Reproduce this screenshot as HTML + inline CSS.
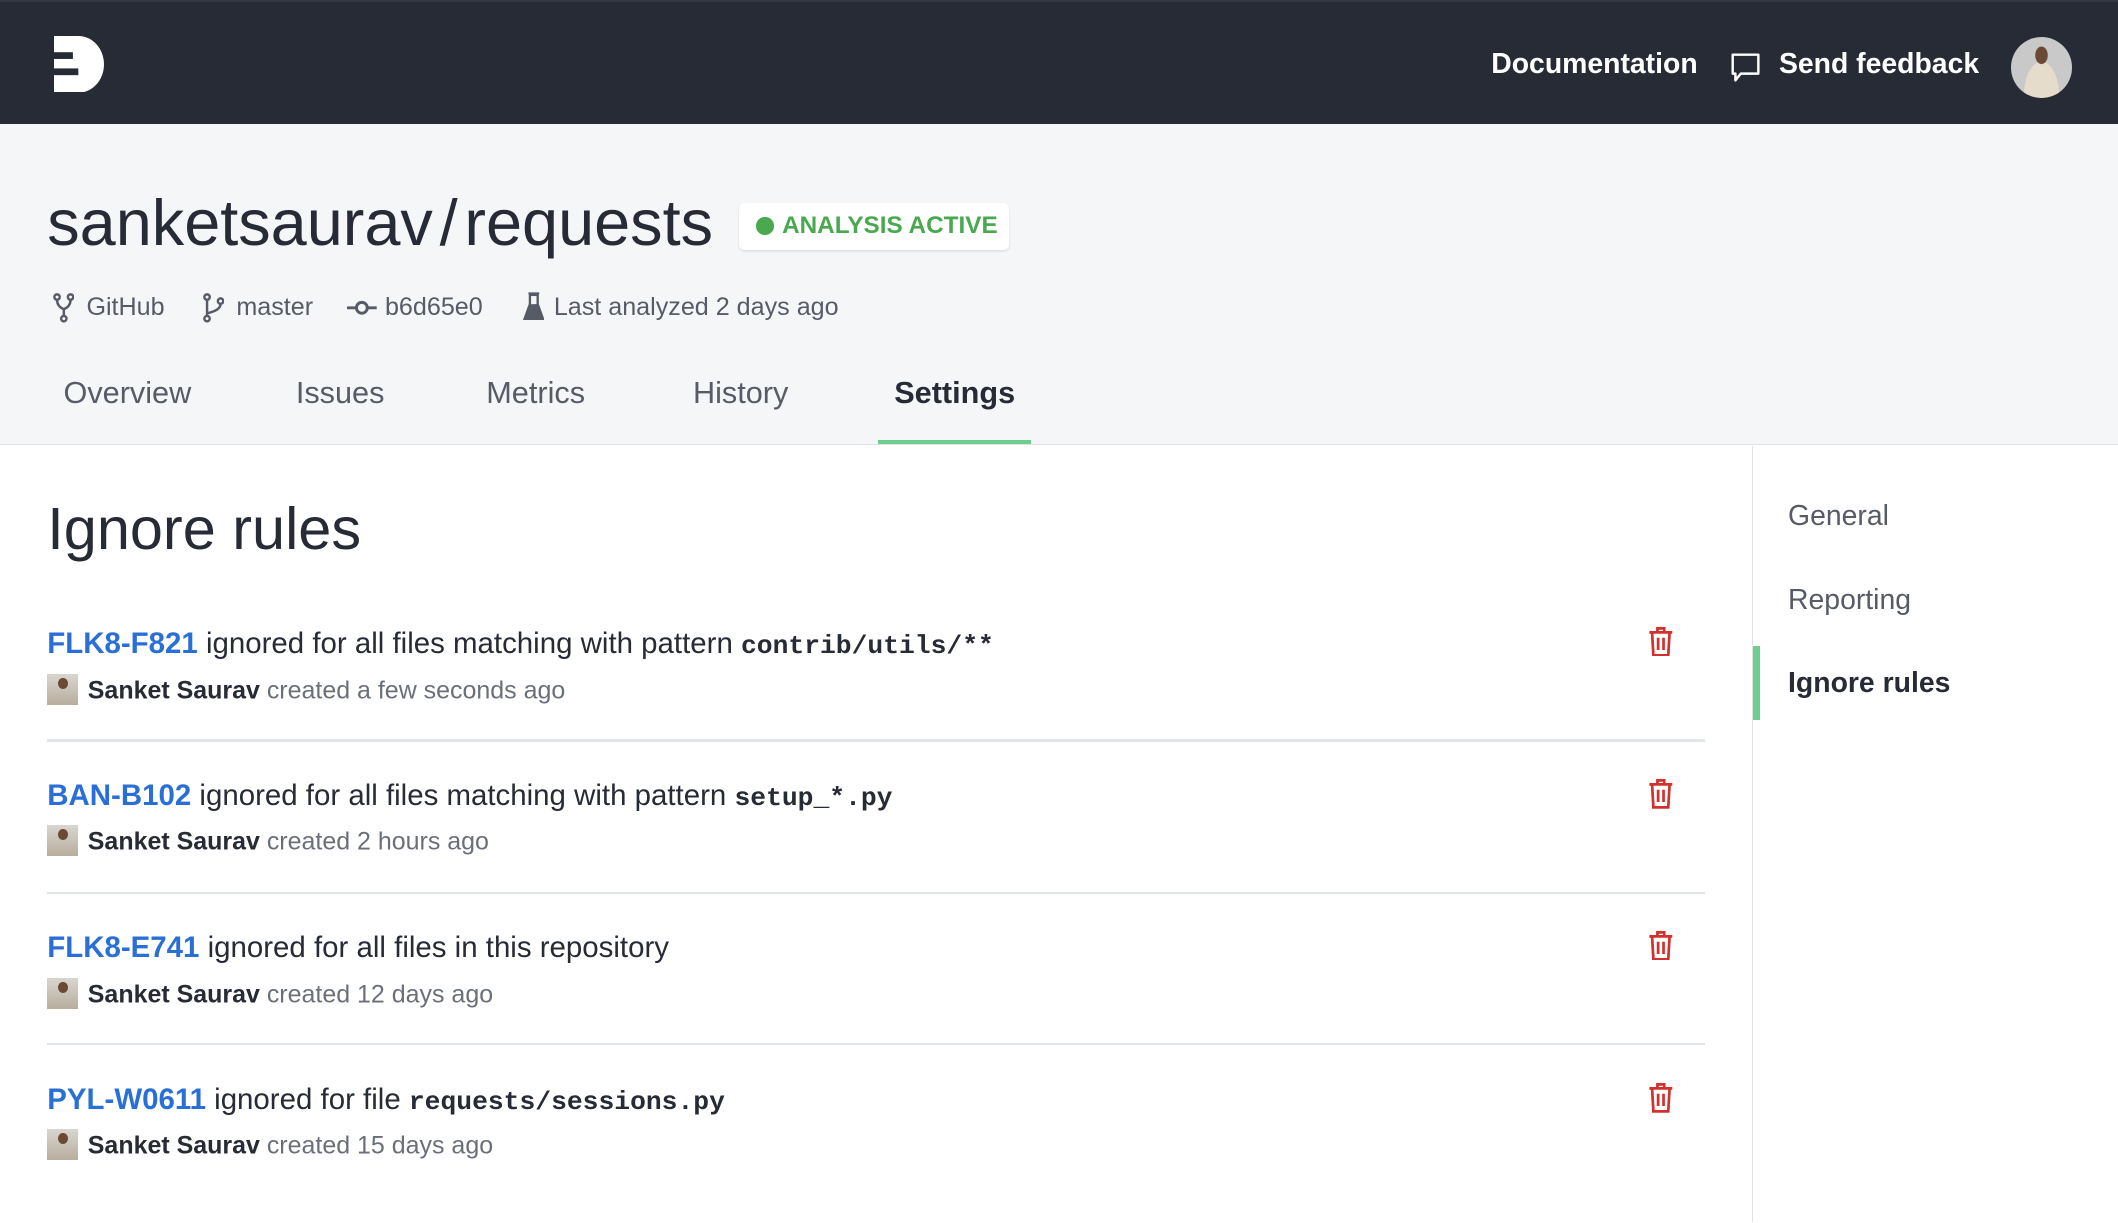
<!DOCTYPE html>
<html><head><meta charset="utf-8"><style>
html,body{margin:0;padding:0}
body{width:1568px;height:905px;zoom:1.35077;overflow:hidden;background:#fff;font-family:"Liberation Sans",sans-serif;color:#272b35;position:relative}
.hdr{position:absolute;left:0;top:0;width:1568px;height:92px;background:#272b35;border-top:2px solid #33373f;box-sizing:border-box}
.gray{position:absolute;left:0;top:92px;width:1568px;height:237px;background:#f5f6f8;border-bottom:1px solid #dfe2e6}
.abs{position:absolute;white-space:nowrap}
.nav{color:#fff;font-weight:bold;font-size:21px}
.meta{font-size:18.6px;color:#565b66;top:217px}
.tab{font-size:22.7px;color:#565b66;top:278px}
.side{position:absolute;left:1297px;top:330px;width:271px;height:575px;border-left:1px solid #dfe2e6}
.sl{position:absolute;left:26px;font-size:21px;color:#565b66}
.row .t{font-size:21.8px;color:#272b35}
.row a{color:#2a6fd6;font-weight:bold;text-decoration:none}
.row code{font-family:"Liberation Mono",monospace;font-weight:bold;font-size:19.5px}
.sub{font-size:18.5px;color:#6a6f7a}
.sub b{color:#272b35}
.av{display:inline-block;width:23px;height:23px;background:linear-gradient(#d9d6d0,#b8ad9d);vertical-align:-5px;margin-right:7px;position:relative}
.av:after{content:"";position:absolute;left:8px;top:3px;width:7px;height:8px;border-radius:50%;background:#6b4a35}
.div{position:absolute;left:35px;width:1227px;height:2px;background:#e1e4e8}
</style></head><body>
<div class="hdr">
 <svg class="abs" style="left:40px;top:25px" width="38" height="42" viewBox="0 0 38 42"><path d="M0 0H18A19 21 0 0 1 18 42H0Z" fill="#fff"/><rect x="0" y="12" width="14" height="5" fill="#272b35"/><rect x="0" y="24" width="18" height="5" fill="#272b35"/></svg>
 <div class="abs nav" style="left:1104px;top:34px">Documentation</div>
 <svg class="abs" style="left:1281px;top:37px" width="24" height="24" viewBox="0 0 24 24"><path d="M2 2H21V16H8L4 21V16H2Z" fill="none" stroke="#fff" stroke-width="1.8" stroke-linejoin="round"/></svg>
 <div class="abs nav" style="left:1317px;top:34px">Send feedback</div>
 <div class="abs" style="left:1489px;top:26px;width:45px;height:45px;border-radius:50%;background:radial-gradient(ellipse at 50% 30%,#6b4a35 0 14%,transparent 15%),radial-gradient(ellipse at 50% 95%,#e6dccb 0 40%,transparent 41%),#c9c9c9"></div>
</div>
<div class="gray"></div>
<div class="abs" style="left:35px;top:137px;font-size:48px;color:#272b35">sanketsaurav<span style="margin:0 5px">/</span>requests</div>
<div class="abs" style="left:547px;top:150px;width:200px;height:35px;background:#fff;border-radius:4px;box-shadow:0 1px 2px rgba(0,0,0,.1)"></div>
<div class="abs" style="left:560px;top:161px;width:13px;height:13px;border-radius:50%;background:#4aa84f"></div>
<div class="abs" style="left:579px;top:157px;font-size:18px;font-weight:bold;color:#4aa84f">ANALYSIS ACTIVE</div>
<svg class="abs" style="left:39px;top:217px" width="16" height="22" viewBox="0 0 16 22"><g fill="none" stroke="#565b66" stroke-width="1.8"><circle cx="3" cy="3" r="2"/><circle cx="13" cy="3" r="2"/><circle cx="8" cy="19" r="2"/><path d="M3 5Q3 10 8 12Q13 10 13 5M8 12V17"/></g></svg>
<div class="abs meta" style="left:64px">GitHub</div>
<svg class="abs" style="left:150px;top:217px" width="16" height="22" viewBox="0 0 16 22"><g fill="none" stroke="#565b66" stroke-width="1.8"><circle cx="3" cy="3" r="2"/><circle cx="13" cy="6" r="2"/><circle cx="3" cy="19" r="2"/><path d="M3 5V17M13 8Q13 13 3 15"/></g></svg>
<div class="abs meta" style="left:175px">master</div>
<svg class="abs" style="left:257px;top:220px" width="22" height="16" viewBox="0 0 22 16"><g fill="none" stroke="#565b66" stroke-width="2.2"><circle cx="11" cy="8" r="4"/><path d="M0 8H7M15 8H22"/></g></svg>
<div class="abs meta" style="left:285px">b6d65e0</div>
<svg class="abs" style="left:387px;top:216px" width="16" height="22" viewBox="0 0 16 22"><path d="M4 1H12M5 1V9L1 20H15L11 9V1" fill="#565b66" stroke="#565b66" stroke-width="1.5"/><rect x="6" y="3" width="4" height="6" fill="#f5f6f8"/></svg>
<div class="abs meta" style="left:410px">Last analyzed 2 days ago</div>
<div class="abs tab" style="left:47px">Overview</div>
<div class="abs tab" style="left:219px">Issues</div>
<div class="abs tab" style="left:360px">Metrics</div>
<div class="abs tab" style="left:513px">History</div>
<div class="abs tab" style="left:662px;color:#272b35;font-weight:bold">Settings</div>
<div class="abs" style="left:650px;top:326px;width:113px;height:3px;background:#6ccf8e"></div>
<div class="side">
 <div class="sl" style="top:40px">General</div>
 <div class="sl" style="top:102px">Reporting</div>
 <div class="abs" style="left:0;top:148px;width:5px;height:55px;background:#6ccf8e"></div>
 <div class="sl" style="top:164px;color:#272b35;font-weight:bold">Ignore rules</div>
</div>
<div class="abs" style="left:35px;top:366px;font-size:44px;color:#272b35">Ignore rules</div>

<div class="row">
 <div class="abs t" style="left:35px;top:464px"><a>FLK8-F821</a> ignored for all files matching with pattern <code>contrib/utils/**</code></div>
 <div class="abs sub" style="left:35px;top:499px"><span class="av"></span><b>Sanket Saurav</b> created a few seconds ago</div>
</div>
<div class="div" style="top:547px"></div>
<div class="row">
 <div class="abs t" style="left:35px;top:577px"><a>BAN-B102</a> ignored for all files matching with pattern <code>setup_*.py</code></div>
 <div class="abs sub" style="left:35px;top:611px"><span class="av"></span><b>Sanket Saurav</b> created 2 hours ago</div>
</div>
<div class="div" style="top:660px"></div>
<div class="row">
 <div class="abs t" style="left:35px;top:689px"><a>FLK8-E741</a> ignored for all files in this repository</div>
 <div class="abs sub" style="left:35px;top:724px"><span class="av"></span><b>Sanket Saurav</b> created 12 days ago</div>
</div>
<div class="div" style="top:772px"></div>
<div class="row">
 <div class="abs t" style="left:35px;top:802px"><a>PYL-W0611</a> ignored for file <code>requests/sessions.py</code></div>
 <div class="abs sub" style="left:35px;top:836px"><span class="av"></span><b>Sanket Saurav</b> created 15 days ago</div>
</div>

<svg class="abs" style="left:1220px;top:464px" width="19" height="22" viewBox="0 0 19 22"><g fill="none" stroke="#d0312d" stroke-width="2"><path d="M1 4H18M7 4V1H12V4M3 4L4 21H15L16 4M7.5 8V17M11.5 8V17"/></g></svg>
<svg class="abs" style="left:1220px;top:577px" width="19" height="22" viewBox="0 0 19 22"><g fill="none" stroke="#d0312d" stroke-width="2"><path d="M1 4H18M7 4V1H12V4M3 4L4 21H15L16 4M7.5 8V17M11.5 8V17"/></g></svg>
<svg class="abs" style="left:1220px;top:689px" width="19" height="22" viewBox="0 0 19 22"><g fill="none" stroke="#d0312d" stroke-width="2"><path d="M1 4H18M7 4V1H12V4M3 4L4 21H15L16 4M7.5 8V17M11.5 8V17"/></g></svg>
<svg class="abs" style="left:1220px;top:802px" width="19" height="22" viewBox="0 0 19 22"><g fill="none" stroke="#d0312d" stroke-width="2"><path d="M1 4H18M7 4V1H12V4M3 4L4 21H15L16 4M7.5 8V17M11.5 8V17"/></g></svg>
</body></html>
